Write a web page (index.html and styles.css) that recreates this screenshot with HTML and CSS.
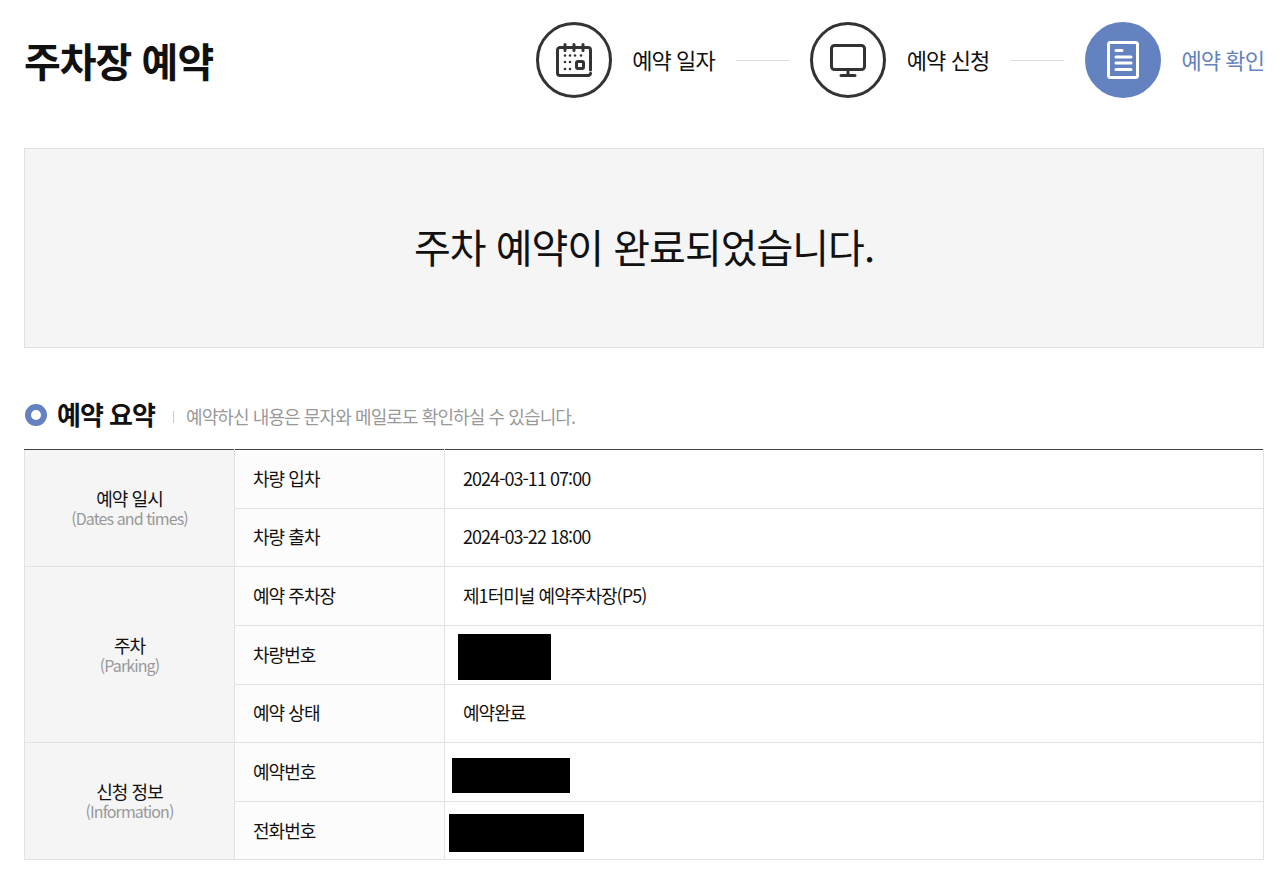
FILE: index.html
```html
<!DOCTYPE html>
<html lang="ko">
<head>
<meta charset="utf-8">
<title>주차장 예약</title>
<link rel="stylesheet" href="styles.css">
</head>
<body>
<main class="page">
  <header class="head">
    <h1 class="title">주차장 예약</h1>
    <ol class="steps">
      <li class="step">
        <span class="circle">
          <svg class="ico" viewBox="0 0 36 34" width="36" height="34" fill="none" stroke="#333" stroke-width="3" stroke-linecap="round" stroke-linejoin="round">
            <path d="M34.500 27V7a2.500 2.500 0 0 0-2.500-2.500H4A2.500 2.500 0 0 0 1.500 7v23A2.500 2.500 0 0 0 4 32.500h28a2.500 2.500 0 0 0 2.500-2"/>
            <path d="M9 1.500v6M18 1.500v6M27 1.500v6"/>
            <rect x="20.500" y="18.500" width="7" height="7" rx="1.500"/>
            <g fill="#333" stroke="none">
              <circle cx="9" cy="12.500" r="1.300"/><circle cx="14" cy="12.500" r="1.300"/><circle cx="19" cy="12.500" r="1.300"/><circle cx="25" cy="12.500" r="1.300"/>
              <circle cx="9" cy="19" r="1.300"/><circle cx="14" cy="19" r="1.300"/>
              <circle cx="9" cy="26" r="1.300"/><circle cx="14" cy="26" r="1.300"/>
            </g>
          </svg>
        </span>
        <span class="label">예약 일자</span>
      </li>
      <li class="line"></li>
      <li class="step">
        <span class="circle">
          <svg class="ico" viewBox="0 0 36 33" width="36" height="33" fill="none" stroke="#333" stroke-width="3" stroke-linecap="round" stroke-linejoin="round">
            <rect x="1.500" y="1.500" width="33" height="24" rx="3"/>
            <path d="M18 26v5M11 31.500h14"/>
          </svg>
        </span>
        <span class="label">예약 신청</span>
      </li>
      <li class="line"></li>
      <li class="step step-on">
        <span class="circle circle-on">
          <svg class="ico" viewBox="0 0 32 38" width="32" height="38" fill="none" stroke="#fff" stroke-width="3" stroke-linecap="round" stroke-linejoin="round">
            <rect x="1.500" y="1.500" width="29" height="35" rx="2"/>
            <path d="M9 9.500h6M9 16h15M9 22h15M9 28.500h15"/>
          </svg>
        </span>
        <span class="label">예약 확인</span>
      </li>
    </ol>
  </header>

  <section class="done">주차 예약이 완료되었습니다.</section>

  <section class="summary">
    <div class="sec-head">
      <span class="bullet"></span>
      <h2 class="sec-title">예약 요약</h2>
      <span class="sep"></span>
      <p class="sec-note">예약하신 내용은 문자와 메일로도 확인하실 수 있습니다.</p>
    </div>
    <table class="tbl">
      <colgroup><col class="c1"><col class="c2"><col></colgroup>
      <tbody>
        <tr>
          <th class="group" rowspan="2">예약 일시<small>(Dates and times)</small></th>
          <th class="sub">차량 입차</th>
          <td>2024-03-11 07:00</td>
        </tr>
        <tr>
          <th class="sub">차량 출차</th>
          <td>2024-03-22 18:00</td>
        </tr>
        <tr>
          <th class="group" rowspan="3">주차<small>(Parking)</small></th>
          <th class="sub">예약 주차장</th>
          <td>제1터미널 예약주차장(P5)</td>
        </tr>
        <tr>
          <th class="sub">차량번호</th>
          <td class="hid"><span class="mask m1"></span></td>
        </tr>
        <tr>
          <th class="sub">예약 상태</th>
          <td>예약완료</td>
        </tr>
        <tr>
          <th class="group" rowspan="2">신청 정보<small>(Information)</small></th>
          <th class="sub">예약번호</th>
          <td class="hid"><span class="mask m2"></span></td>
        </tr>
        <tr>
          <th class="sub">전화번호</th>
          <td class="hid"><span class="mask m3"></span></td>
        </tr>
      </tbody>
    </table>
  </section>
</main>
</body>
</html>
```
FILE: styles.css
```css
* { box-sizing: border-box; }
html, body { margin: 0; padding: 0; background: #fff; }
body {
  font-family: "Noto Sans CJK KR", "Noto Sans", sans-serif;
  color: #111;
  letter-spacing: -0.95px;
}
.page { padding: 22px 21px 19px 24px; }
.head { display: flex; justify-content: space-between; align-items: center; height: 76px; }
.title { margin: 0; font-size: 40px; font-weight: 700; letter-spacing: -1px; line-height: 76px; color: #111; }
.steps { display: flex; align-items: center; list-style: none; margin: 0; padding: 0; }
.step { display: flex; align-items: center; gap: 20.5px; }
.circle {
  width: 76px; height: 76px; border-radius: 50%;
  border: 3px solid #333; display: flex; align-items: center; justify-content: center; background: #fff;
}
.circle-on { background: #6482c0; border-color: #6482c0; }
.label { font-size: 22px; line-height: 28px; padding-bottom: 2px; white-space: nowrap; color: #111; letter-spacing: -0.9px; }
.step-on .label { color: #6482c0; }
.line { width: 53px; height: 1px; background: #ddd; margin: 0 21.25px; }
.done {
  margin-top: 50px; height: 200px; border: 1px solid #e0e0e0; background: #f5f5f5;
  display: flex; align-items: center; justify-content: center; padding-bottom: 4px;
  font-size: 40px; letter-spacing: -1px; color: #111;
}
.summary { margin-top: 50px; }
.sec-head { display: flex; align-items: center; height: 34px; margin-bottom: 17px; }
.bullet { width: 22px; height: 22px; border-radius: 50%; border: 6px solid #6482c0; background: #fff; margin: 0 10px 0 1px; }
.sec-title { margin: 0; font-size: 26px; font-weight: 700; line-height: 34px; letter-spacing: -1px; padding-bottom: 2px; }
.sep { width: 1px; height: 12px; background: #ccc; margin: 3px 12px 0 18px; }
.sec-note { margin: 1px 0 0; font-size: 18px; line-height: 26px; color: #999; letter-spacing: -0.9px; }
.tbl { width: 100%; border-collapse: collapse; table-layout: fixed; border-top: 1px solid #444; font-size: 18px; }
.c1, .c2 { width: 210px; }
.tbl th, .tbl td { border: 1px solid #e2e2e2; font-weight: 400; height: 58.630px; padding: 0 18px 2px; text-align: left; line-height: 22px; }
.tbl tr:first-child th, .tbl tr:first-child td { border-top: 1px solid #444; }
.tbl .group { background: #f5f5f5; text-align: center; padding: 0 0 2px; }
.tbl .sub { background: #fcfcfc; }
.tbl td { position: relative; }
.group small { display: block; font-size: 16px; color: #999; line-height: 18px; letter-spacing: -0.9px; }
.mask { position: absolute; background: #000; }
.m1 { left: 13px; top: 8px; width: 93px; height: 46px; }
.m2 { left: 7px; top: 15px; width: 118px; height: 35px; }
.m3 { left: 4px; top: 12px; width: 135px; height: 38px; }
```
